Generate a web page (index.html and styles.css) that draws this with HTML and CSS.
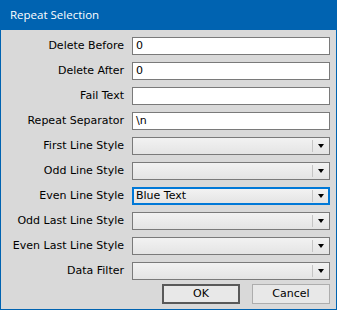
FILE: index.html
```html
<!DOCTYPE html>
<html>
<head>
<meta charset="utf-8">
<link rel="stylesheet" href="styles.css">
</head>
<body>
<div class="window">
  <div class="titlebar">Repeat Selection</div>
  <div class="content">
    <div class="form">
      <div class="label">Delete Before</div>
      <div class="field text">0</div>
      <div class="label">Delete After</div>
      <div class="field text">0</div>
      <div class="label">Fail Text</div>
      <div class="field text"></div>
      <div class="label">Repeat Separator</div>
      <div class="field text">\n</div>
      <div class="label">First Line Style</div>
      <div class="field combo"><span class="value"></span><span class="sep"></span><span class="arrow"></span></div>
      <div class="label">Odd Line Style</div>
      <div class="field combo"><span class="value"></span><span class="sep"></span><span class="arrow"></span></div>
      <div class="label">Even Line Style</div>
      <div class="field combo focused"><span class="value">Blue Text</span><span class="sep"></span><span class="arrow"></span></div>
      <div class="label">Odd Last Line Style</div>
      <div class="field combo"><span class="value"></span><span class="sep"></span><span class="arrow"></span></div>
      <div class="label">Even Last Line Style</div>
      <div class="field combo"><span class="value"></span><span class="sep"></span><span class="arrow"></span></div>
      <div class="label">Data Filter</div>
      <div class="field combo"><span class="value"></span><span class="sep"></span><span class="arrow"></span></div>
    </div>
    <div class="buttons">
      <div class="btn default">OK</div>
      <div class="btn">Cancel</div>
    </div>
  </div>
</div>
</body>
</html>
```
FILE: styles.css
```css
html, body {
  margin: 0;
  padding: 0;
}
body {
  width: 337px;
  height: 310px;
  overflow: hidden;
  font-family: "DejaVu Sans", sans-serif;
  font-size: 11px;
  color: #000;
}
.window {
  width: 337px;
  height: 310px;
  box-sizing: border-box;
  background: #d9d9d9;
  border: 1px solid #0063b1;
  border-top: none;
  display: flex;
  flex-direction: column;
}
.titlebar {
  height: 30px;
  margin: 0 -1px;
  background: #0063b1;
  color: #fff;
  font-family: "Open Sans", sans-serif;
  font-size: 11.5px;
  line-height: 30px;
  padding-left: 10px;
}
.content {
  padding: 7px 6px 0 0;
}
.form {
  display: grid;
  grid-template-columns: 123px 198px;
  grid-auto-rows: 18px;
  column-gap: 8px;
  row-gap: 7px;
}
.label {
  text-align: right;
  line-height: 18px;
  white-space: nowrap;
}
.field {
  box-sizing: border-box;
  height: 18px;
  border: 1px solid #7a7a7a;
  line-height: 16px;
}
.text {
  background: #fff;
  padding-left: 3px;
}
.combo {
  display: flex;
  align-items: center;
  background: linear-gradient(#f2f2f2, #e4e4e4);
}
.combo .value {
  flex: 1;
  padding-left: 3px;
}
.combo .sep {
  width: 1px;
  height: 12px;
  background: #c4c4c4;
  margin-right: 5px;
}
.combo .arrow {
  width: 0;
  height: 0;
  border-left: 3.5px solid transparent;
  border-right: 3.5px solid transparent;
  border-top: 4px solid #000;
  margin-right: 5px;
}
.combo.focused {
  border: 2px solid #0078d7;
}
.combo.focused .value {
  padding-left: 2px;
}
.combo.focused .arrow {
  margin-right: 4px;
}
.combo.focused .sep {
  margin-right: 5px;
}
.buttons {
  display: flex;
  justify-content: flex-end;
  gap: 12px;
  margin-top: 4px;
}
.btn {
  box-sizing: border-box;
  width: 78px;
  height: 20px;
  border: 1px solid #adadad;
  background: #e8e8e8;
  text-align: center;
  line-height: 18px;
}
.btn.default {
  border: 2px solid #595959;
  line-height: 16px;
}
```
